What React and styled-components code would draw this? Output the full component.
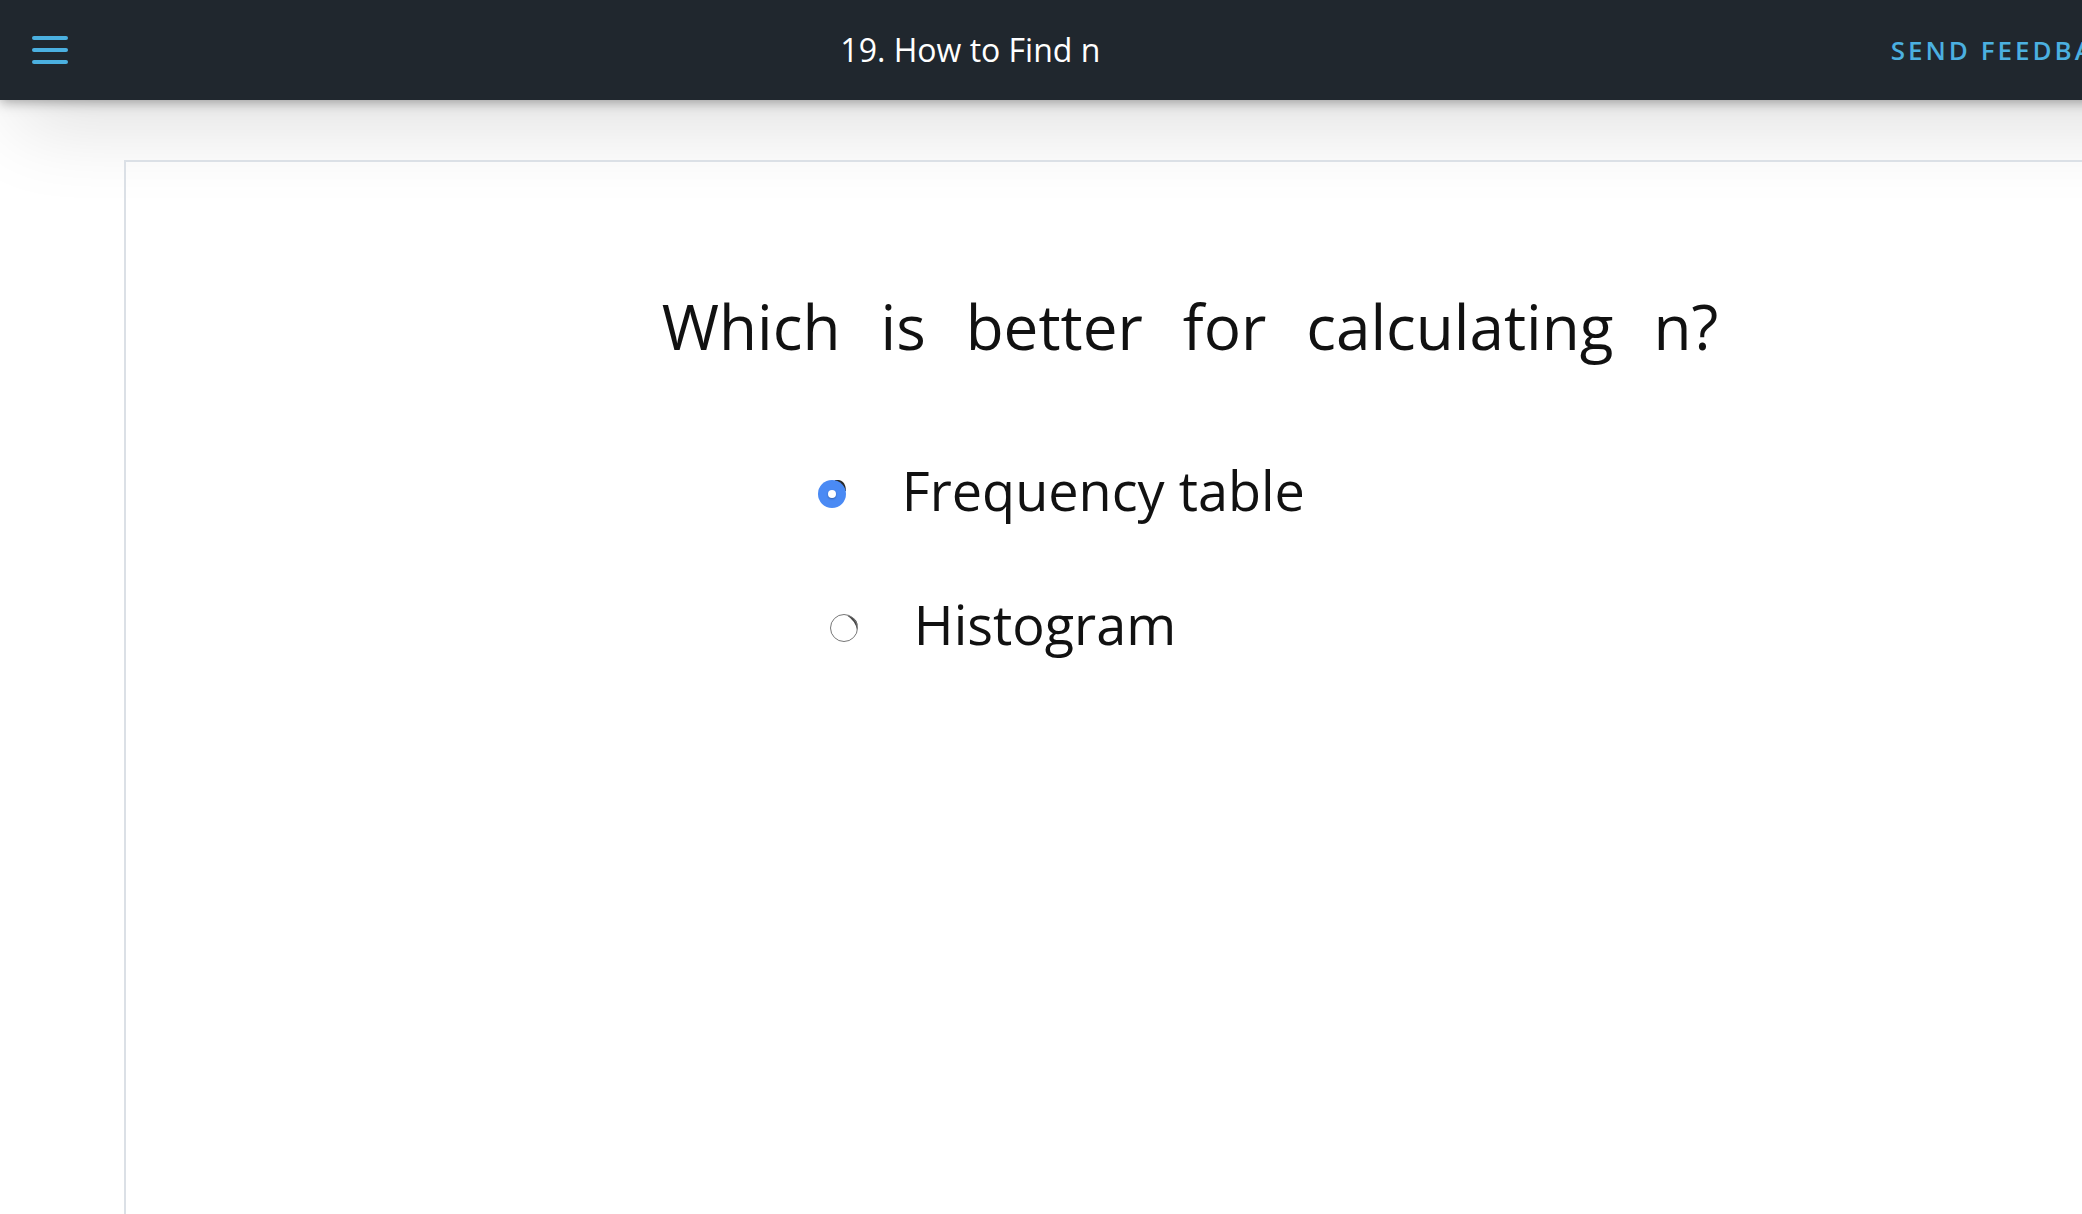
import React, { useState } from "react";
import styled, { createGlobalStyle } from "styled-components";

const GlobalStyle = createGlobalStyle`
  *, *::before, *::after { box-sizing: border-box; }
  html, body { margin: 0; background: #fff; overflow: hidden; }
  body { font-family: "Open Sans", "Noto Sans", sans-serif; }
`;

const Page = styled.div`
  display: flex;
  flex-direction: column;
  width: calc(100% + 80px);
  min-height: 100vh;
`;

const Header = styled.header`
  display: grid;
  grid-template-columns: 100px 1fr auto;
  align-items: center;
  height: 100px;
  background: #20272e;
  box-shadow: 0 2px 12px rgba(0, 0, 0, 0.35), 16px 28px 80px rgba(0, 0, 0, 0.12);
`;

const MenuButton = styled.button`
  display: grid;
  place-items: center;
  height: 100px;
  padding: 0;
  border: 0;
  background: none;
  cursor: pointer;
`;

const Title = styled.h1`
  margin: 0;
  color: #fff;
  font-size: 32px;
  font-weight: 400;
  line-height: 48px;
  text-align: center;
`;

const FeedbackButton = styled.button`
  padding: 0 28px 0 50px;
  border: 0;
  background: none;
  color: #4bb0e0;
  font: 600 26px/48px "Open Sans", "Noto Sans", sans-serif;
  letter-spacing: 3px;
  text-transform: uppercase;
  white-space: nowrap;
  cursor: pointer;
`;

const Frame = styled.main`
  display: flex;
  flex: 1;
  justify-content: center;
  align-items: flex-start;
  margin: 60px -94px 0 124px;
  padding: 124px 0 0;
  border: 2px solid #dbe0e6;
  border-bottom: 0;
`;

const Quiz = styled.fieldset`
  margin: 0;
  padding: 0;
  border: 0;
  color: #111;
`;

const Question = styled.legend`
  display: flex;
  gap: 40px;
  padding: 0;
  margin-bottom: 92px;
  font-size: 62px;
  line-height: 80px;
  white-space: nowrap;
`;

const Options = styled.div`
  display: flex;
  flex-direction: column;
  align-items: flex-start;
  gap: 62px;
  padding-left: 156px;
`;

const Option = styled.label`
  display: flex;
  align-items: center;
  gap: 56px;
  margin-left: ${({ $indent }) => ($indent ? "12px" : "0")};
  cursor: pointer;
`;

const OptionText = styled.span`
  padding-bottom: 8px;
  font-size: 54px;
  line-height: 64px;
  white-space: nowrap;
`;

const RadioBox = styled.span`
  display: grid;
  width: 28px;
  height: 28px;

  > * { grid-area: 1 / 1; }
`;

const Radio = styled.input`
  appearance: none;
  display: grid;
  place-items: center;
  width: 28px;
  height: 28px;
  margin: 0;
  border: 1px solid #777;
  border-radius: 50%;
  cursor: pointer;

  &:checked {
    border: 0;
    background: #4a8af4;
  }

  &:checked::before {
    content: "";
    width: 8px;
    height: 8px;
    border-radius: 50%;
    background: #fff;
    box-shadow: 0 1px 2px rgba(0, 0, 0, 0.3);
  }
`;

const MenuIcon = () => (
  <svg width="36" height="28" viewBox="0 0 36 28" fill="#4bb0e0" aria-hidden="true">
    <rect width="36" height="4" rx="2" />
    <rect y="12" width="36" height="4" rx="2" />
    <rect y="24" width="36" height="4" rx="2" />
  </svg>
);

const InkMark = ({ heavy }) => (
  <svg width="28" height="28" viewBox="0 0 28 28" fill="none" aria-hidden="true">
    {heavy ? (
      <path d="M17 1.5Q26 0 26.5 11" stroke="#292929" strokeWidth="3" />
    ) : (
      <path d="M17 1.5Q26 3 27.5 10L27 16Q25.5 7 17 1.5Z" fill="#444" />
    )}
  </svg>
);

const words = ["Which", "is", "better", "for", "calculating", "n?"];
const answers = [
  { id: "table", text: "Frequency table" },
  { id: "histogram", text: "Histogram", indent: true },
];

export default function App() {
  const [choice, setChoice] = useState("table");
  return (
    <>
      <GlobalStyle />
      <Page>
        <Header>
          <MenuButton type="button" aria-label="Menu">
            <MenuIcon />
          </MenuButton>
          <Title>19. How to Find n</Title>
          <FeedbackButton type="button">Send feedback</FeedbackButton>
        </Header>
        <Frame>
          <Quiz>
            <Question>
              {words.map((word) => (
                <span key={word}>{word} </span>
              ))}
            </Question>
            <Options>
              {answers.map(({ id, text, indent }) => (
                <Option key={id} htmlFor={id} $indent={indent}>
                  <RadioBox>
                    <InkMark heavy={choice === id} />
                    <Radio
                      type="radio"
                      name="answer"
                      id={id}
                      checked={choice === id}
                      onChange={() => setChoice(id)}
                    />
                  </RadioBox>
                  <OptionText>{text}</OptionText>
                </Option>
              ))}
            </Options>
          </Quiz>
        </Frame>
      </Page>
    </>
  );
}
